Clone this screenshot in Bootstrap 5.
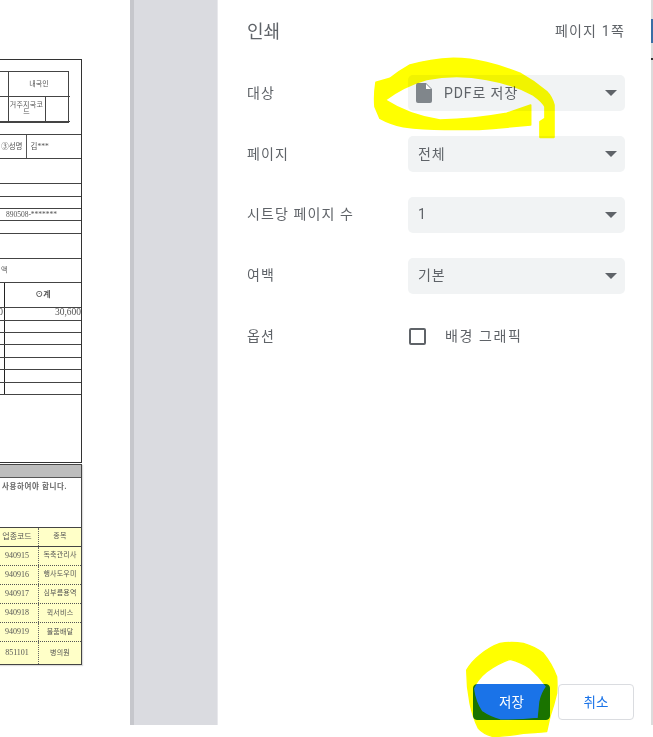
<!DOCTYPE html>
<html lang="ko">
<head>
    <meta charset="UTF-8">
    <meta name="viewport" content="width=device-width, initial-scale=1.0">
    <title>인쇄</title>
    <link href="https://cdn.jsdelivr.net/npm/bootstrap@5.3.0/dist/css/bootstrap.min.css" rel="stylesheet">
    <style>
        body {
            width: 653px;
            height: 737px;
            overflow: hidden;
            background: #fff;
            font-family: Roboto, "Noto Sans CJK KR", sans-serif;
            color: #5f6368;
        }
        .print-shell { height: 725px; }

        /* preview side */
        .preview-pane {
            width: 130px;
            padding-top: 59px;
            overflow: hidden;
            background: #fff;
        }
        .gutter {
            width: 88px;
            background: #dadbe0;
            border-left: 4px solid #c6c7cc;
            border-right: 1px solid #e8e8ec;
        }
        .sheet {
            flex: 0 0 100px;
            width: 100px;
            margin-right: 48px;
            font-family: "Liberation Serif", "Noto Sans CJK KR", serif;
            font-size: 7px;
            line-height: 1;
            color: #555;
            filter: blur(0.45px);
        }
        .num-big { font-size: 9.5px; }
        .num-id { font-size: 7.5px; }
        .doc-box { border: 1.5px solid #333; border-left: 0; background: #fff; }
        .doc-box-top { height: 404px; }
        .doc-box-bottom { height: 201px; margin-top: 1px; border-color: #444; box-shadow: 1px 1px 1px #ddd; }
        .line { border-bottom: 1px solid #444; }
        .h12 { height: 12.3px; }
        .h13 { height: 12.7px; }
        .h24 { height: 24.5px; }
        .h25 { height: 25px; }
        .doc-head { height: 74.5px; padding-top: 11px; }
        .inner-grid {
            display: grid;
            grid-template-columns: 24.5px 37px 25px;
            grid-template-rows: 25px 25px;
            width: 87px;
            border: 1px solid #444;
        }
        .inner-grid > div { display: flex; align-items: center; justify-content: center; text-align: center; border-left: 1px solid #444; border-bottom: 1px solid #444; }
        .inner-grid > .wide { grid-column: span 2; }
        .inner-grid > .wrap-cell { font-size: 7px; letter-spacing: .3px; padding: 0 1px; word-break: break-all; }
        .name-label { width: 44.5px; border-right: 1px solid #555; padding-right: 3px; font-size: 7.5px; }
        .name-value { font-size: 7.5px; }
        .split-left { width: 23px; border-right: 1px solid #222; text-align: right; padding-right: 1px; }
        .total-head { font-size: 8px; font-weight: 700; }
        .gray-band { height: 12.5px; background: #bdbdbd; border-bottom: 1px solid #555; }
        .note { height: 49px; padding: 5px 0 0 20px; font-size: 7.5px; font-weight: 700; letter-spacing: .6px; color: #666; white-space: nowrap; }
        .tint-row { background: #ffffc8; border-bottom: 1px dotted #555; height: 19.2px; }
        .tint-row.head { height: 20px; border-top: 1px solid #444; border-bottom: 1px solid #444; }
        .tint-row.last { border-bottom: 0; height: 22px; }
        .tint-code { width: 57px; border-right: 1px dotted #666; padding-left: 14px; justify-content: center; font-size: 8px; }
        .tint-kind { flex: 1; justify-content: center; letter-spacing: .2px; }

        /* settings side */
        .settings {
            flex: 1;
            padding: 0 26px 5px 29px;
        }
        .settings-head { height: 63px; }
        .settings-title { font-size: 18px; }
        .sheet-count { font-size: 14px; color: #5f6368; letter-spacing: 1.2px; }
        .opt-row { height: 60.8px; font-size: 14px; }
        .opt-label { width: 161px; letter-spacing: 1.1px; }
        .opt-check-text { letter-spacing: 1.6px; }
        .pick {
            flex: 1;
            height: 36px;
            padding: 0 8px 0 10px;
            background: #f1f3f4;
            border-radius: 5px;
            font-size: 14px;
            letter-spacing: .9px;
        }
        .pick-icon { margin-left: -2px; margin-right: 12px; }
        .caret-down {
            width: 0; height: 0;
            margin-left: auto;
            margin-right: 0;
            border-left: 6px solid transparent;
            border-right: 6px solid transparent;
            border-top: 6px solid #5f6368;
        }
        .bg-check.form-check-input {
            width: 17px; height: 17px;
            margin: 0 19px 0 1px;
            background-color: #fff;
            border: 2px solid #5f6368;
            border-radius: 2px;
            box-shadow: none;
        }
        .btn-save, .btn-dismiss {
            width: 76px;
            height: 36px;
            padding: 0;
            font-size: 13.5px;
            border-radius: 4px;
        }
        .btn-save { width: 77px; background: #1a73e8; border: 1px solid #1a73e8; color: #fff; }
        .btn-dismiss { background: #fff; border: 1px solid #dadce0; color: #1a73e8; }
        .action-row { gap: 8px; margin-right: -9px; }

        .edge-strip { width: 2px; background: #dcdcdc; }
        .edge-blue { height: 24px; margin-top: 19px; background: #3a6ea5; }
        .edge-dark { height: 2px; margin-top: 15px; background: #333; }

        .scribble {
            position: absolute;
            top: 0; left: 0;
            mix-blend-mode: multiply;
            pointer-events: none;
        }
    </style>
</head>
<body class="position-relative">
    <div class="print-shell d-flex">
        <div class="preview-pane d-flex justify-content-end align-items-start flex-shrink-0">
            <div class="sheet">
                <div class="doc-box doc-box-top">
                    <div class="doc-head line">
                        <div class="inner-grid">
                            <div></div><div class="wide">내국인</div>
                            <div></div><div class="wrap-cell">거주지국코드</div><div></div>
                        </div>
                    </div>
                    <div class="d-flex h24 line">
                        <div class="name-label d-flex align-items-center justify-content-end">③성명</div>
                        <div class="name-value d-flex align-items-center ps-1">김***</div>
                    </div>
                    <div class="h25 line"></div>
                    <div class="h13 line"></div>
                    <div class="h12 line"></div>
                    <div class="h12 line num-id d-flex align-items-center justify-content-center">890508-*******</div>
                    <div class="h12 line"></div>
                    <div class="h25 line"></div>
                    <div class="h24 line d-flex align-items-center" style="padding-left:19px">액</div>
                    <div class="d-flex h25 line">
                        <div class="split-left"></div>
                        <div class="total-head flex-fill d-flex align-items-center justify-content-center">⊙계</div>
                    </div>
                    <div class="d-flex h13 line num-big">
                        <div class="split-left">0</div>
                        <div class="flex-fill text-end">30,600</div>
                    </div>
                    <div class="d-flex h12 line"><div class="split-left"></div></div>
                    <div class="d-flex h12 line"><div class="split-left"></div></div>
                    <div class="d-flex h13 line"><div class="split-left"></div></div>
                    <div class="d-flex h12 line"><div class="split-left"></div></div>
                    <div class="d-flex h13 line"><div class="split-left"></div></div>
                    <div class="d-flex h12 line"><div class="split-left"></div></div>
                </div>
                <div class="doc-box doc-box-bottom">
                    <div class="gray-band"></div>
                    <div class="note">사용하여야 합니다.</div>
                    <div class="tint-row head d-flex"><div class="tint-code d-flex align-items-center">업종코드</div><div class="tint-kind d-flex align-items-center">종목</div></div>
                    <div class="tint-row d-flex"><div class="tint-code d-flex align-items-center">940915</div><div class="tint-kind d-flex align-items-center">독축관리사</div></div>
                    <div class="tint-row d-flex"><div class="tint-code d-flex align-items-center">940916</div><div class="tint-kind d-flex align-items-center">행사도우미</div></div>
                    <div class="tint-row d-flex"><div class="tint-code d-flex align-items-center">940917</div><div class="tint-kind d-flex align-items-center">심부름용역</div></div>
                    <div class="tint-row d-flex"><div class="tint-code d-flex align-items-center">940918</div><div class="tint-kind d-flex align-items-center">퀵서비스</div></div>
                    <div class="tint-row d-flex"><div class="tint-code d-flex align-items-center">940919</div><div class="tint-kind d-flex align-items-center">물품배달</div></div>
                    <div class="tint-row last d-flex"><div class="tint-code d-flex align-items-center">851101</div><div class="tint-kind d-flex align-items-center">병의원</div></div>
                </div>
            </div>
        </div>
        <div class="gutter flex-shrink-0"></div>

        <div class="settings d-flex flex-column">
            <div class="settings-head d-flex justify-content-between align-items-center">
                <div class="settings-title">인쇄</div>
                <div class="sheet-count">페이지 1쪽</div>
            </div>
            <div class="opt-row d-flex align-items-center">
                <div class="opt-label">대상</div>
                <div class="pick d-flex align-items-center">
                    <svg width="16" height="20" viewBox="0 0 16 20" class="pick-icon flex-shrink-0"><path fill="#80868b" d="M2 0h8l6 6v12a2 2 0 0 1-2 2H2a2 2 0 0 1-2-2V2a2 2 0 0 1 2-2z"/><path fill="#fff" d="M10 1v5h5z"/></svg>
                    <span>PDF로 저장</span>
                    <span class="caret-down"></span>
                </div>
            </div>
            <div class="opt-row d-flex align-items-center">
                <div class="opt-label">페이지</div>
                <div class="pick d-flex align-items-center"><span>전체</span><span class="caret-down"></span></div>
            </div>
            <div class="opt-row d-flex align-items-center">
                <div class="opt-label">시트당 페이지 수</div>
                <div class="pick d-flex align-items-center"><span>1</span><span class="caret-down"></span></div>
            </div>
            <div class="opt-row d-flex align-items-center">
                <div class="opt-label">여백</div>
                <div class="pick d-flex align-items-center"><span>기본</span><span class="caret-down"></span></div>
            </div>
            <div class="opt-row d-flex align-items-center">
                <div class="opt-label">옵션</div>
                <input class="form-check-input bg-check" type="checkbox" id="bgGraphics">
                <label class="opt-check-text" for="bgGraphics">배경 그래픽</label>
            </div>
            <div class="action-row d-flex justify-content-end mt-auto">
                <button type="button" class="btn btn-save">저장</button>
                <button type="button" class="btn btn-dismiss">취소</button>
            </div>
        </div>
        <div class="edge-strip flex-shrink-0">
            <div class="edge-blue"></div>
            <div class="edge-dark"></div>
        </div>
    </div>

    <!-- highlighter marks, coordinates read from 3x crops -->
    <svg class="scribble" width="653" height="737" viewBox="0 0 653 737">
        <g transform="translate(360 50) scale(.3333)" stroke="#ffff00" stroke-width="5" stroke-linejoin="round">
            <path fill="#ffff00" d="M512 165L440 190Q340 208 240 210Q150 198 75 150Q130 108 200 88Q290 70 380 88Q460 102 520 135Q548 155 555 170L555 205L540 215L540 262L582 262L582 165Q575 140 560 125Q520 92 480 70Q430 50 380 38Q330 25 280 25Q210 28 150 45Q115 65 90 85L48 97Q42 135 45 170L60 205Q90 222 130 230Q200 240 280 238Q340 240 400 235L512 225Z"/>
        </g>
        <g transform="translate(450 630) scale(.3333)" stroke="#ffff00" stroke-width="4" stroke-linejoin="round">
            <path fill="#ffff00" fill-rule="evenodd" d="M50 120Q65 95 90 75Q120 50 150 40Q185 35 220 40Q255 50 280 70Q305 100 320 140Q322 165 320 190Q312 225 300 260L290 305Q255 308 220 310Q175 318 130 320Q100 312 85 295Q68 260 60 220Q50 170 50 120ZM70 175Q85 145 110 125Q145 100 180 88Q212 95 240 115Q268 140 290 170Q275 190 270 215L265 265Q205 272 150 270Q120 262 95 245Q75 215 70 175Z"/>
        </g>
    </svg>

    <script src="https://cdn.jsdelivr.net/npm/bootstrap@5.3.0/dist/js/bootstrap.bundle.min.js"></script>
</body>
</html>
